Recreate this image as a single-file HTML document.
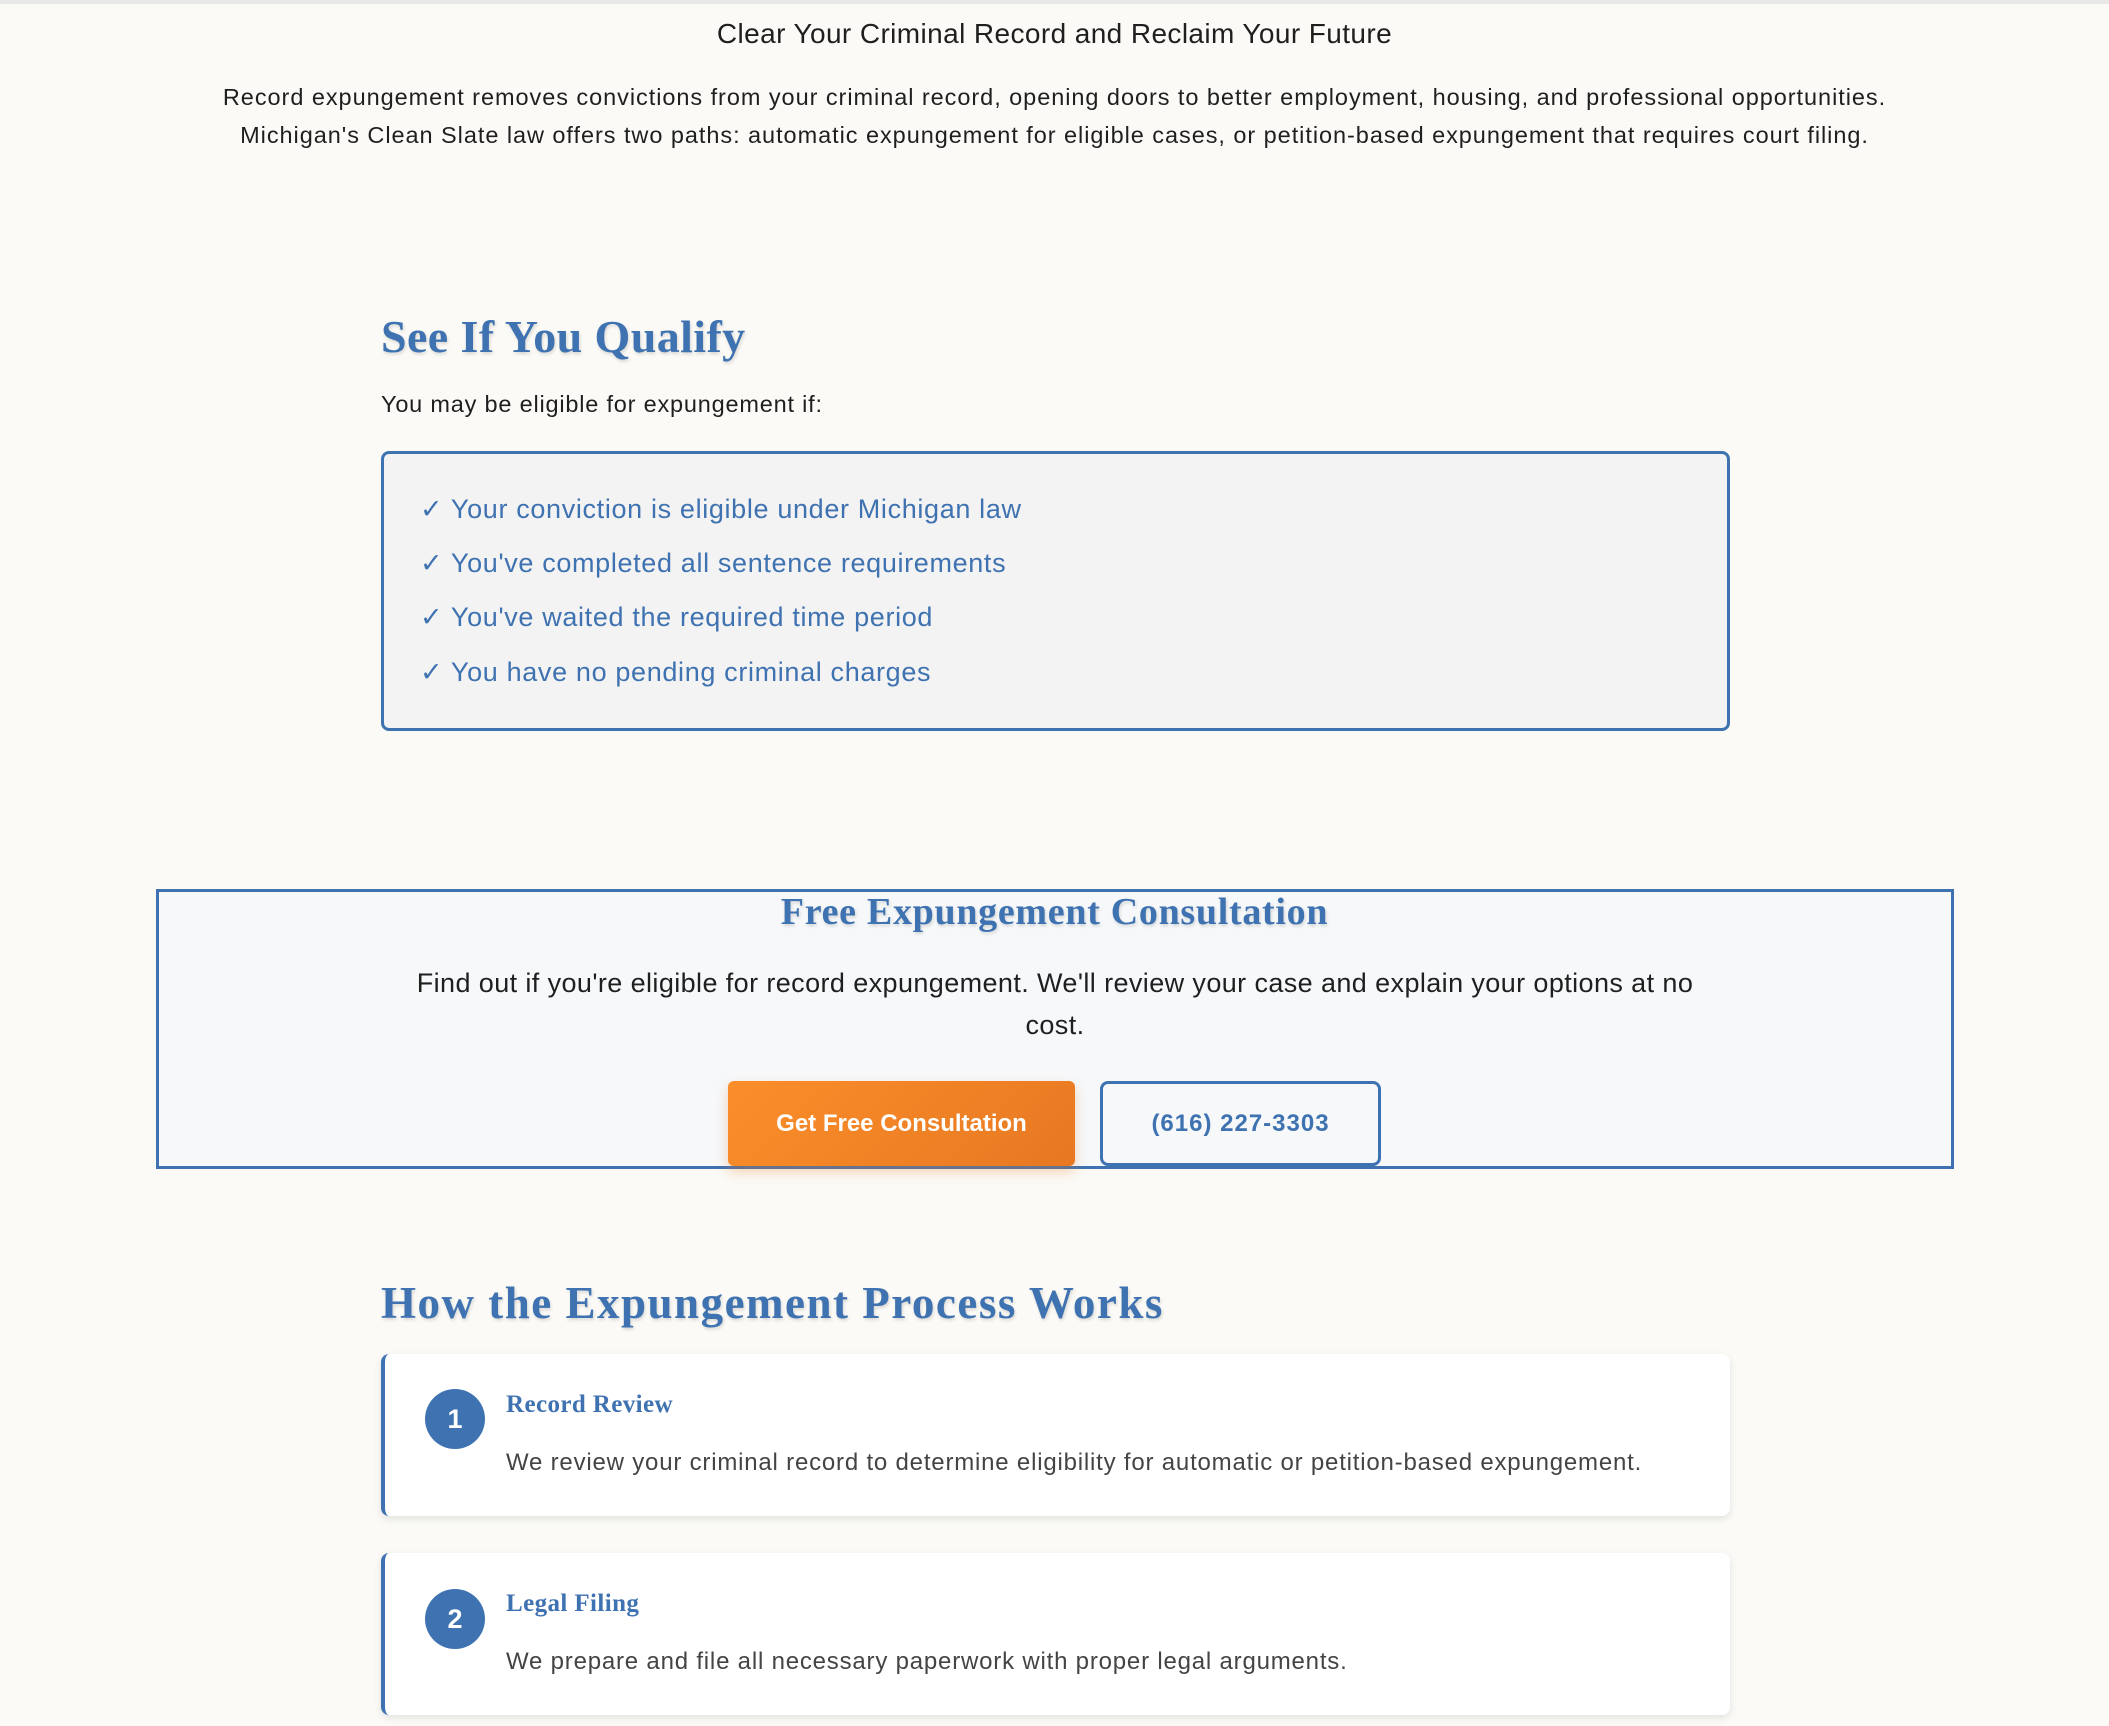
<!DOCTYPE html>
<html><head><meta charset="utf-8"><style>
*{box-sizing:border-box;margin:0;padding:0}
body{width:2109px;height:1726px;overflow:hidden;background:#fbfaf6;font-family:"Liberation Sans",sans-serif;color:#1f1f1f;position:relative}
.abs{position:absolute}
.topline{top:0;left:0;width:2109px;height:4px;background:#e8e8e8}
.c{left:0;width:2109px;text-align:center}
h2{font-family:"Liberation Serif",serif;font-weight:bold;color:#3f72b0;font-size:45px;text-shadow:1px 2px 3px rgba(0,0,0,.15)}
.box{left:381px;top:451px;width:1349px;height:280px;border:3px solid #3f72b0;border-radius:8px;background:#f3f3f3}
.li{left:420px;font-size:27px;color:#3f72b0;letter-spacing:0.65px}
.cons{left:156px;top:889px;width:1798px;height:280px;border:3px solid #3f72b0;background:#f6f8fa}
.btn{top:1081px;height:85px;border-radius:6px;font-weight:bold;font-size:24px;display:flex;align-items:center;justify-content:center}
.card{left:381px;width:1349px;height:162px;background:#fff;border-left:4px solid #3f72b0;border-radius:8px;box-shadow:0 3px 8px rgba(0,0,0,.1)}
.num{left:40px;width:60px;height:60px;border-radius:50%;background:#3f72b0;color:#fff;font-size:27px;font-weight:bold;display:flex;align-items:center;justify-content:center}
.ct{left:121px;font-family:"Liberation Serif",serif;font-weight:bold;font-size:25px;color:#3f72b0;letter-spacing:0.4px}
.cd{left:121px;font-size:24px;color:#444;letter-spacing:0.8px}
</style></head><body>
<div class="abs topline"></div>
<div class="abs c" style="top:18px;font-size:28px;letter-spacing:0.4px">Clear Your Criminal Record and Reclaim Your Future</div>
<div class="abs c" style="top:78px;font-size:23.5px;line-height:38px;letter-spacing:0.95px">Record expungement removes convictions from your criminal record, opening doors to better employment, housing, and professional opportunities.<br>Michigan's Clean Slate law offers two paths: automatic expungement for eligible cases, or petition-based expungement that requires court filing.</div>
<h2 class="abs" style="left:381px;top:310px;font-size:46px;letter-spacing:0.4px">See If You Qualify</h2>
<div class="abs" style="left:381px;top:391px;font-size:23.5px;letter-spacing:0.8px">You may be eligible for expungement if:</div>
<div class="abs box"></div>
<div class="abs li" style="top:494px">✓ Your conviction is eligible under Michigan law</div>
<div class="abs li" style="top:548px">✓ You've completed all sentence requirements</div>
<div class="abs li" style="top:602px">✓ You've waited the required time period</div>
<div class="abs li" style="top:657px">✓ You have no pending criminal charges</div>
<div class="abs cons"></div>
<div class="abs c" style="top:890px;font-family:'Liberation Serif',serif;font-weight:bold;font-size:38px;color:#3f72b0;letter-spacing:0.7px;text-shadow:1px 2px 3px rgba(0,0,0,.15)">Free Expungement Consultation</div>
<div class="abs" style="left:395px;width:1320px;top:962px;text-align:center;font-size:27px;line-height:42px;letter-spacing:0.4px">Find out if you're eligible for record expungement. We'll review your case and explain your options at no cost.</div>
<div class="abs btn" style="left:728px;width:347px;color:#fff;background:linear-gradient(135deg,#fb8e2a,#e77822);box-shadow:0 6px 12px rgba(230,120,30,.3)">Get Free Consultation</div>
<div class="abs btn" style="left:1100px;width:281px;color:#3f72b0;border:3px solid #3f72b0;background:#f6f8fa;border-radius:8px;letter-spacing:1px">(616) 227-3303</div>
<h2 class="abs" style="left:381px;top:1277px;letter-spacing:1.5px">How the Expungement Process Works</h2>
<div class="abs card" style="top:1354px">
<div class="abs num" style="top:35px">1</div>
<div class="abs ct" style="top:37px">Record Review</div>
<div class="abs cd" style="top:95px">We review your criminal record to determine eligibility for automatic or petition-based expungement.</div>
</div>
<div class="abs card" style="top:1553px">
<div class="abs num" style="top:36px">2</div>
<div class="abs ct" style="top:37px">Legal Filing</div>
<div class="abs cd" style="top:95px">We prepare and file all necessary paperwork with proper legal arguments.</div>
</div>
</body></html>
